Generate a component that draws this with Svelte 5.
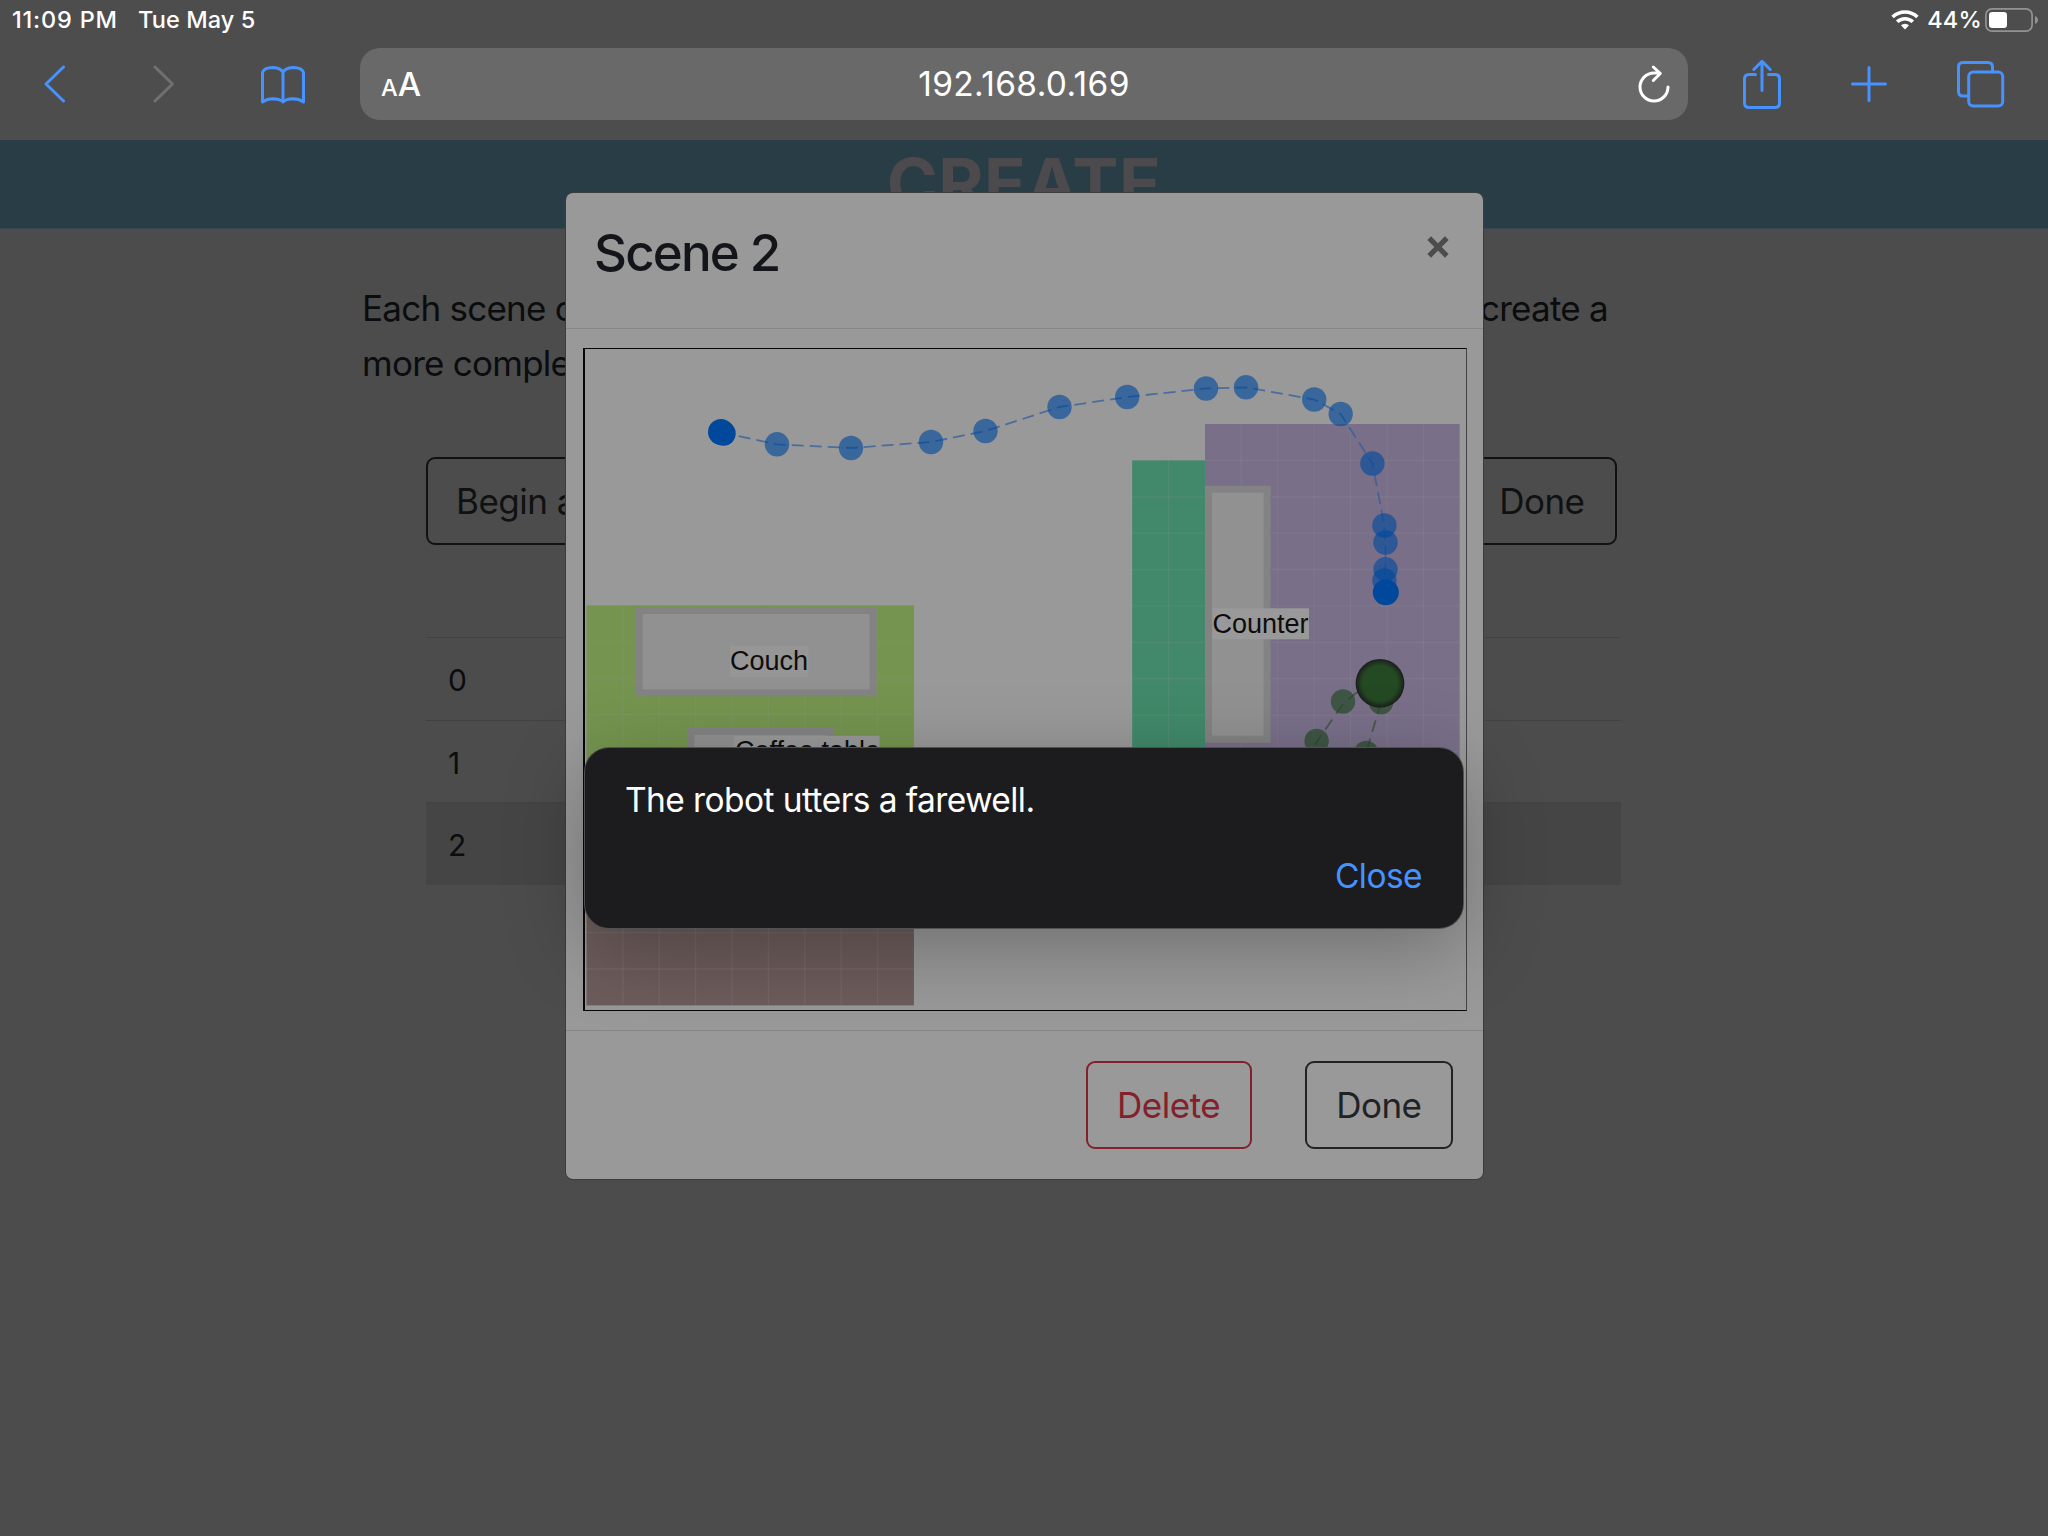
<script>
  const blue = [[777,444.3],[851,448],[931,442],[985.5,431],[1059.5,407],[1127.2,397],[1206,388.5],[1246,387.3],[1314.2,399.5],[1340.7,414],[1372.4,463.5],[1384.4,525.5],[1385.5,542.5],[1385.5,569.3],[1384.4,580.5]];
  const green = [[1343,701.5],[1381,702.3],[1316.6,741],[1366.2,753]];
  const route = 'M721 432.5 ' + blue.map((p) => `L${p[0]} ${p[1]}`).join(' ') + ' L1385.8 592.3';
  const S = 36.38;
  const zones = [
    { x: 586.5, y: 605.3, cols: 9, rows: 6, c: '#74944f' },
    { x: 586.5, y: 823.5, cols: 9, rows: 5, c: '#6c5c5b' },
    { x: 1132.2, y: 460.4, cols: 2, rows: 9, c: '#41896a' },
    { x: 1205, y: 424, cols: 7, rows: 10, c: '#796f89' },
  ];
  const rows = [0, 1, 2];
</script>

<div class="screen">
  <header class="chrome">
    <div class="status">
      <span class="time">11:09 PM</span><span class="date">Tue May 5</span>
      <svg class="wifi" width="28" height="21" viewBox="0 0 28 21" fill="none" stroke="#fff" stroke-width="3.6">
        <path d="M1.6 8a17.8 17.8 0 0 1 24.8 0" /><path d="M6.2 12.8a11.3 11.3 0 0 1 15.6 0" />
        <path d="M14 20.5l-4-4.2a5.8 5.8 0 0 1 8 0z" fill="#fff" stroke="none" />
      </svg>
      <span class="pct">44%</span>
      <svg class="batt" width="54" height="24" viewBox="0 0 54 24">
        <rect x=".9" y=".9" width="46.2" height="22.2" rx="6" fill="none" stroke="#939393" stroke-width="1.7" />
        <rect x="4" y="4" width="18" height="16" rx="3.2" fill="#fff" />
        <path d="M50 8c4 1.5 4 6.500 0 8z" fill="#939393" />
      </svg>
    </div>
    <nav class="bar">
      <svg class="back" width="24" height="40" viewBox="0 0 24 40"><path d="M20.500 3L3 20l17.500 17" /></svg>
      <svg class="fwd" width="24" height="40" viewBox="0 0 24 40"><path d="M3 3l17.500 17L3 37" /></svg>
      <svg class="book" width="46" height="40" viewBox="0 0 46 40"><path d="M2.500 38V8.500Q4 3.500 13 3.500Q21 4 23 8.500Q25 4 33 3.500Q42 3.500 43.500 8.500V38Q39 34.800 33 34.800Q26 35 23 38Q20 35 13 34.800Q7 34.800 2.500 38zM23 8.500V38" /></svg>
      <div class="address">
        <span class="aa"><small>A</small>A</span>
        <span class="url">192.168.0.169</span>
        <svg class="reload" width="34" height="40" viewBox="0 0 34 40"><path d="M31 23a14 14 0 1 1-14-14h6M16.300 3l7 6.500-7 7" /></svg>
      </div>
      <svg class="share" width="40" height="50" viewBox="0 0 40 50"><path d="M13.500 15.500H7q-4.500 0-4.500 4.500v24q0 4.500 4.500 4.500h26q4.500 0 4.500-4.500V20q0-4.500-4.500-4.500h-6.500M20 31.500V2.500M11.800 10.500L20 2.300l8.200 8.200" /></svg>
      <svg class="plus" width="38" height="38" viewBox="0 0 38 38"><path d="M19 2.500v33M2.500 19h33" /></svg>
      <svg class="tabs" width="50" height="48" viewBox="0 0 50 48"><rect x="12.700" y="12" width="34" height="34" rx="4.500" /><path d="M36.500 12V7q0-4.500-4.500-4.500H7Q2.500 2.500 2.500 7v24.500q0 4.500 4.500 4.500h5.500" /></svg>
    </nav>
  </header>

  <div class="banner"><h1>CREATE</h1></div>

  <main>
    <p class="intro"><span>Each scene can</span><span>create a</span></p>
    <p class="intro"><span>more complex</span></p>
    <div class="actions"><button class="dim begin">Begin a new</button><button class="dim">Done</button></div>
    <div class="table">
      {#each rows as r}<div class="row" class:on={r === 2}>{r}</div>{/each}
    </div>
  </main>

  <section class="modal">
    <div class="head"><h2>Scene 2</h2>
      <svg width="22" height="22" viewBox="0 0 22 22"><path d="M2.200 2.200l17.600 17.600M19.800 2.200L2.200 19.800" stroke="#4c4c4c" stroke-width="5.200" /></svg>
    </div>
    <div class="body">
      <svg class="map" width="881" height="661" viewBox="585 349 881 661">
        {#each zones as z}
          <rect x={z.x} y={z.y} width={z.cols * S} height={z.rows * S} fill={z.c} />
          <g stroke="#9a9a9a" stroke-opacity=".17" stroke-width="1.300">
            {#each Array(z.cols - 1) as _, i}<path d="M{z.x + (i + 1) * S} {z.y}v{z.rows * S}" />{/each}
            {#each Array(z.rows - 1) as _, i}<path d="M{z.x} {z.y + (i + 1) * S}h{z.cols * S}" />{/each}
          </g>
        {/each}
        <g fill="#919191" stroke="#838383" stroke-width="7">
          <rect x="639.200" y="610.500" width="234" height="82.300" />
          <rect x="690.800" y="731.500" width="139.400" height="80" />
          <rect x="1208.500" y="489.200" width="58.700" height="250" />
        </g>
        <g fill="#999">
          <rect x="730" y="646" width="78.500" height="31" fill="#969696" /><rect x="734" y="735.700" width="145.600" height="31" /><rect x="1212.500" y="608.300" width="96.500" height="31" />
        </g>
        <g class="names">
          <text x="730" y="670.300">Couch</text><text x="735" y="760">Coffee table</text><text x="1212.500" y="632.700">Counter</text>
        </g>
        <path d={route} fill="none" stroke="#2f5f9f" stroke-opacity=".75" stroke-width="1.800" stroke-dasharray="12 6" />
        <g fill="#00489c" fill-opacity=".62">{#each blue as [x, y]}<circle cx={x} cy={y} r="12.200" />{/each}</g>
        <g fill="#00489c"><circle cx="721" cy="432" r="13" /><circle cx="723.500" cy="433.500" r="12.200" /><circle cx="1385.800" cy="592.300" r="13" /></g>
        <path d="M1375 684L1356 693L1343 704L1300 766M1381 702L1366 753" fill="none" stroke="#365237" stroke-opacity=".75" stroke-width="1.800" stroke-dasharray="12 7" />
        <g fill="#244a26" fill-opacity=".68">{#each green as [x, y]}<circle cx={x} cy={y} r="12.200" />{/each}</g>
        <defs><radialGradient id="person"><stop offset=".72" stop-color="#244a23" /><stop offset=".97" stop-color="#1c221c" /></radialGradient></defs>
        <circle cx="1380" cy="683.300" r="24.400" fill="url(#person)" />
      </svg>
    </div>
    <div class="foot"><button class="del">Delete</button><button>Done</button></div>
  </section>

  <div class="alert"><p>The robot utters a farewell.</p><span class="close">Close</span></div>
</div>

<style>
  :global(body) { background: #4c4c4c; }
  .screen { position: relative; width: 2048px; height: 1536px; overflow: hidden; background: #4c4c4c; font-family: Inter, "Liberation Sans", sans-serif; color: #0b0c0d; }
  h1, h2, p { margin: 0; }
  .chrome { height: 140px; background: #4d4d4d; color: #fff; }
  .status { box-sizing: border-box; display: flex; align-items: center; height: 40px; padding: 0 9px 1px 12px; font-size: 23.500px; font-weight: 500; }
  .time { width: 126px; white-space: nowrap; letter-spacing: .8px; }
  .date { flex: 1; letter-spacing: .1px; }
  .pct { margin: 0 3px 0 8px; letter-spacing: .2px; }
  .bar { display: flex; align-items: center; height: 88px; }
  .bar svg { flex: none; fill: none; stroke: #4692ff; stroke-width: 3; stroke-linecap: round; stroke-linejoin: round; margin-bottom: 1px; }
  .bar .back { margin-left: 43px; }
  .bar .fwd { margin-left: 85px; stroke: #707070; }
  .bar .book { margin-left: 84px; }
  .address { box-sizing: border-box; flex: none; display: grid; grid-template-columns: 1fr auto 1fr; align-items: center; width: 1328px; height: 72px; margin-left: 54px; padding: 0 17px; border-radius: 20px; background: #696969; }
  .aa { margin-left: 4px; padding-top: 4px; font-size: 33px; line-height: 40px; font-weight: 500; letter-spacing: -1px; }
  .aa small { font-size: 23.500px; letter-spacing: 0; }
  .url { font-size: 33.500px; letter-spacing: .35px; }
  .bar .reload { justify-self: end; stroke: #fff; margin: 0; }
  .bar .share { margin-left: 54px; }
  .bar .plus { margin-left: 68px; }
  .bar .tabs { margin-left: 68px; margin-bottom: 0; }
  .banner { height: 89px; box-sizing: border-box; border-bottom: 1px solid #33474d; background: #283d45; text-align: center; }
  h1 { font-size: 69px; line-height: 86px; color: #4c4a4d; font-weight: 700; letter-spacing: .5px; }
  main { width: 1280px; margin: 0 auto; padding-top: 52px; }
  .intro { display: flex; justify-content: space-between; width: 1246px; margin-left: -22px; height: 55px; line-height: 55px; font-size: 35px; letter-spacing: -.75px; }
  .actions { display: flex; justify-content: space-between; width: 1191px; margin: 66px 0 0 42px; }
  button { box-sizing: border-box; height: 88px; padding: 0 29.500px; border: 2px solid #1f2326; border-radius: 9px; background: none; font: 35px Inter, sans-serif; letter-spacing: -.5px; color: #1f2326; }
  .dim { border-color: #101112; color: #101112; }
  .dim { padding: 0 30.500px 0 28px; }
  .table { width: 1195px; margin: 92px 0 0 42px; }
  .row { box-sizing: border-box; height: 82.500px; padding-left: 22px; border-top: 1.500px solid #424242; font-size: 30px; line-height: 85px; }
  .on { background: #454545; }
  .modal { position: absolute; left: 566px; top: 193px; width: 917px; height: 986px; box-sizing: border-box; border-radius: 7px; background: #999; box-shadow: 0 0 0 1px #3a3c3e; display: flex; flex-direction: column; }
  .head { display: flex; justify-content: space-between; height: 135px; padding: 0 34px 0 28px; border-bottom: 1px solid #85888b; }
  h2 { margin-top: 28px; font-size: 51px; line-height: 64px; font-weight: 500; letter-spacing: -1.800px; color: #14151a; }
  .head svg { margin-top: 43px; }
  .body { height: 702px; box-sizing: border-box; padding: 19px 0 0 17px; border-bottom: 1px solid #858585; }
  .map { display: block; border: 1px solid #070707; border-left-width: 2px; border-right-color: #444; }
  .names { font: 27px "Liberation Sans", Arial, sans-serif; fill: #0d0d0d; }
  .foot { display: flex; justify-content: flex-end; gap: 53px; padding: 30px 30px 0 0; }
  .del { color: #84202b; border-color: #84202b; }
  .alert { position: absolute; left: 585px; top: 748px; width: 878px; height: 180px; box-sizing: border-box; padding: 30px 41px 0 40px; border-radius: 24px; background: #1c1c1e; color: #fff; box-shadow: 0 0 0 1px #505152, 0 20px 80px rgba(0, 0, 0, .28); font-size: 33.500px; line-height: 44px; letter-spacing: -.57px; display: flex; flex-direction: column; }
  .close { align-self: flex-end; margin-top: 32px; color: #4692ff; }
</style>
